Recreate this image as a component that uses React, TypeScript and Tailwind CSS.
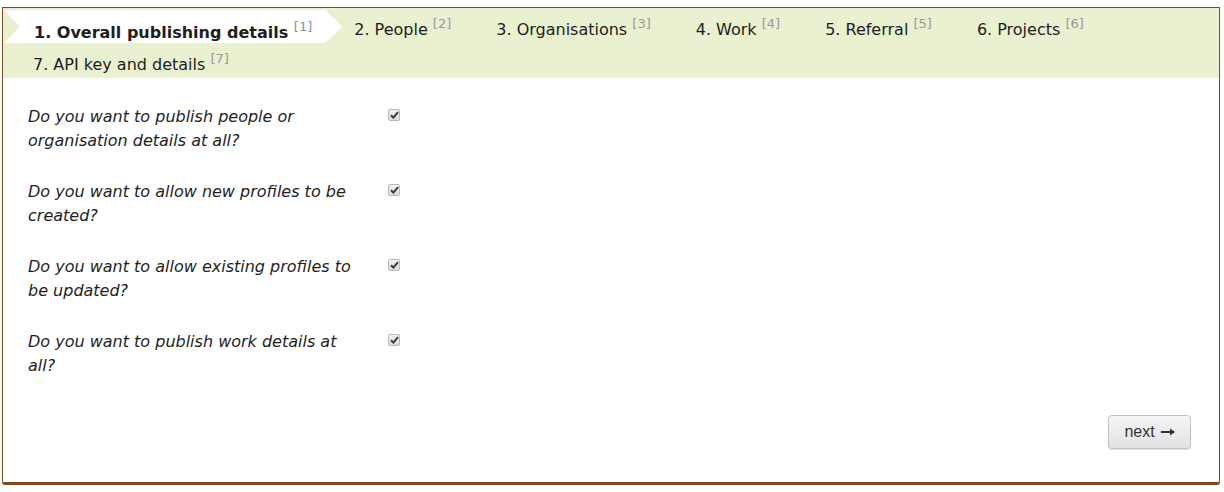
import React from "react";

const tabs = [
  { label: "1. Overall publishing details", n: 1 },
  { label: "2. People", n: 2 },
  { label: "3. Organisations", n: 3 },
  { label: "4. Work", n: 4 },
  { label: "5. Referral", n: 5 },
  { label: "6. Projects", n: 6 },
  { label: "7. API key and details", n: 7 },
];

const questions = [
  "Do you want to publish people or organisation details at all?",
  "Do you want to allow new profiles to be created?",
  "Do you want to allow existing profiles to be updated?",
  "Do you want to publish work details at all?",
];

function Check() {
  return (
    <span className="mt-[4px] ml-[20px] flex h-[12px] w-[12px] shrink-0 items-center justify-center rounded-[2px] border border-[#b9b9b9] bg-gradient-to-b from-[#f2f2f2] to-[#dcdcdc]">
      <svg width="9" height="8" viewBox="0 0 9 8">
        <path d="M1 4.3 L3.4 6.6 L8 1.2" fill="none" stroke="#3a3a3a" strokeWidth="2" />
      </svg>
    </span>
  );
}

export default function App() {
  return (
    <div className="pt-[7px] pl-[2px] font-['DejaVu_Sans',sans-serif] text-[16px] text-[#1e1e1e]">
      <div className="w-[1218px] rounded-b-[3px] border-x border-t border-b-[3px] border-[#87481f] bg-white">
        {/* tabs */}
        <div className="flex flex-wrap items-start bg-[#e9f1d0] pl-[1px]">
          {tabs.map((t, i) =>
            i === 0 ? (
              <div
                key={t.n}
                className="relative z-10 mt-[2px] mr-[-17px] h-[33px] bg-white pt-[11px] pr-[30px] pl-[30px] leading-6 font-bold whitespace-nowrap [clip-path:polygon(0_0,calc(100%_-_17px)_0,100%_50%,calc(100%_-_17px)_100%,0_100%,16px_50%)]"
              >
                {t.label}{" "}
                <span className="relative -top-[7px] text-[13px] font-normal text-[#8a8f98]">[{t.n}]</span>
              </div>
            ) : (
              <div key={t.n} className="h-[35px] pt-[10px] pr-[16px] pl-[29px] leading-6 whitespace-nowrap">
                {t.label}{" "}
                <span className="relative -top-[7px] text-[13px] text-[#9a9a9a]">[{t.n}]</span>
              </div>
            )
          )}
        </div>

        {/* questions */}
        <div className="px-[25px] pt-[27px] pb-[33px]">
          <div className="flex flex-col gap-[27px]">
            {questions.map((q) => (
              <div key={q} className="flex items-start">
                <p className="w-[340px] leading-6 italic">{q}</p>
                <Check />
              </div>
            ))}
          </div>

          <div className="mt-[37px] flex justify-end pr-[3px]">
            <button className="flex h-[34px] w-[83px] items-center justify-center gap-[6px] rounded-[4px] border border-[#c0c0c0] bg-gradient-to-b from-[#f6f6f6] to-[#e2e2e2] font-['Liberation_Sans',sans-serif] text-[16px] text-[#333] shadow-[0_1px_1px_rgba(0,0,0,0.12)]">
              next
              <svg width="14" height="8" viewBox="0 0 14 8">
                <path d="M0 3 H9 V0.5 L14 4 L9 7.5 V5 H0 Z" fill="#333" />
              </svg>
            </button>
          </div>
        </div>
      </div>
    </div>
  );
}
